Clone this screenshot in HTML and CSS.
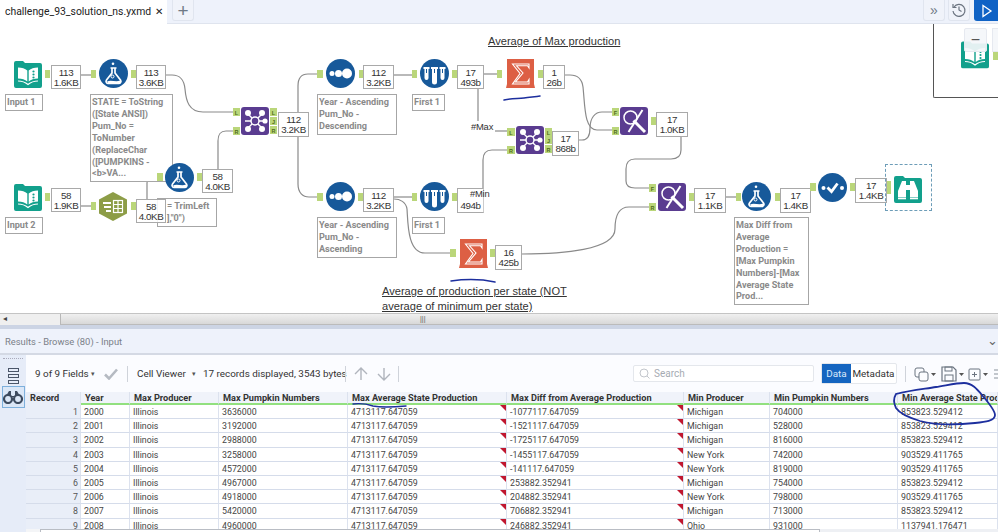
FILE: index.html
```html
<!DOCTYPE html>
<html lang="en">
<head>
<meta charset="utf-8">
<title>challenge_93_solution_ns.yxmd</title>
<link rel="stylesheet" href="styles.css">
</head>
<body>
<header class="tabbar">
  <div class="tab"><span class="tab-name">challenge_93_solution_ns.yxmd</span><span class="tab-x">&#10005;</span></div>
  <div class="tab-rest">
    <button class="tb-btn tb-plus">+</button>
    <div class="spacer"></div>
    <button class="tb-btn tb-more">&raquo;</button>
    <button class="tb-btn tb-hist"><svg width="16" height="16" viewBox="0 0 16 16" fill="none" stroke="#6b7480" stroke-width="1.2"><path d="M3 5a6 6 0 1 1-1 4"/><path d="M2 2v3.500h3.500"/><path d="M8 4.500V8l2.500 1.500"/></svg></button>
    <button class="tb-run"><svg width="12" height="14" viewBox="0 0 12 14" fill="none" stroke="#fff" stroke-width="1.3"><path d="M2 1.500 10 7l-8 5.500z"/></svg></button>
  </div>
</header>

<main class="canvas">
  <svg class="wires" width="998" height="289" viewBox="0 24 998 289" fill="none" stroke="#8a8a8a" stroke-width="1.2">
    <path d="M81 75H91"/>
    <path d="M166 75h6c8 0 12 4 13 14 1 12 4 23 18 23h30"/>
    <path d="M81 206H91"/>
    <path d="M147 199v-16c0-5 3-6 6-6h4"/>
    <path d="M218 169v-28c0-8 3-10 8-10h7"/>
    <path d="M298 112V86c0-9 4-12 10-12h9"/>
    <path d="M298 137v47c0 9 5 13 11 13h8"/>
    <path d="M394 75h18"/>
    <path d="M394 197h18"/>
    <path d="M484 74h13"/>
    <path d="M478 89v34"/>
    <path d="M495 131h12"/>
    <path d="M483 188v-28c0-7 3-10 9-10h15"/>
    <path d="M565 75h5c7 0 12 4 13 12 2 18 1 43 14 43h15"/>
    <path d="M579 140h3c6 0 8-4 8-12 0-10 5-16 12-16h10"/>
    <path d="M681 137v13c0 6-3 9-10 9h-36c-6 0-9 4-9 10v12c0 5 4 7 9 7h15"/>
    <path d="M394 199c6 0 12 3 13 10 1 12 0 44 18 44h25"/>
    <path d="M522 254c40 0 93-4 93-25 0-15 5-22 14-22h21"/>
    <path d="M726 197h10"/>
  </svg>

  <div class="note note-a">Average of Max production</div>
  <div class="note note-b">Average of production per state (NOT<br>average of minimum per state)</div>

  <div class="label l-in1">Input 1</div>
  <div class="label l-state">STATE = ToString<br>([State ANSI])<br>Pum_No =<br>ToNumber<br>(ReplaceChar<br>([PUMPKINS -<br>&lt;b&gt;VA...</div>
  <div class="label l-in2">Input 2</div>
  <div class="label l-trim">= TrimLeft<br>],"0")</div>
  <div class="label l-s1">Year - Ascending<br>Pum_No -<br>Descending</div>
  <div class="label l-f1">First 1</div>
  <div class="label l-s2">Year - Ascending<br>Pum_No -<br>Ascending</div>
  <div class="label l-f2">First 1</div>
  <div class="label l-diff">Max Diff from<br>Average<br>Production =<br>[Max Pumpkin<br>Numbers]-[Max<br>Average State<br>Prod...</div>

  <div class="badge b1">113<br>1.6KB</div>
  <div class="badge b2">113<br>3.6KB</div>
  <div class="badge b3">112<br>3.2KB</div>
  <div class="badge b4">112<br>3.2KB</div>
  <div class="badge b5">17<br>493b</div>
  <div class="badge b6">1<br>26b</div>
  <div class="badge b7">17<br>868b</div>
  <div class="badge b8">17<br>1.0KB</div>
  <div class="badge b9">58<br>1.9KB</div>
  <div class="badge b10">58<br>4.0KB</div>
  <div class="badge b11">58<br>4.0KB</div>
  <div class="badge b12">112<br>3.2KB</div>
  <div class="badge b13">&nbsp;<br>494b</div>
  <div class="badge b14">16<br>425b</div>
  <div class="badge b15">17<br>1.1KB</div>
  <div class="badge b16">17<br>1.4KB</div>
  <div class="badge b17">17<br>1.4KB</div>

  <div class="tag tag-max">#Max</div>
  <div class="tag tag-min">#Min</div>

  <div class="selection"></div>

  <svg class="icons" width="998" height="289" viewBox="0 24 998 289">
    <defs>
      <symbol id="i-book" viewBox="0 0 28 28">
        <path d="M0 3a2 2 0 0 1 2-2h7l2 2h15a2 2 0 0 1 2 2v21a2 2 0 0 1-2 2H2a2 2 0 0 1-2-2z" fill="#12a08c"/>
        <path d="M4 7.500c4 0 7 1 9.300 3v11c-2.300-2-5.300-3-9.300-3zM14.700 10.500c2.300-2 5.300-3 9.300-3v11c-4 0-7 1-9.300 3z" fill="#fff"/>
        <circle cx="19.500" cy="11.500" r="1.100" fill="#12a08c"/><circle cx="19.500" cy="14.500" r="1.100" fill="#12a08c"/><circle cx="19.500" cy="17.500" r="1.100" fill="#12a08c"/>
        <path d="M4 21c4 0 7 1 10 3.500 3-2.500 6-3.500 10-3.500" fill="none" stroke="#fff" stroke-width="1.200"/>
      </symbol>
      <symbol id="i-flask" viewBox="0 0 29 29">
        <circle cx="14.500" cy="14.500" r="14.500" fill="#17599a"/>
        <circle cx="14" cy="4.800" r="1.300" fill="#fff"/>
        <path d="M11.500 9h6M13 9v5l-5.500 7a2.200 2.200 0 0 0 2 3.500h10a2.200 2.200 0 0 0 2-3.500L16 14V9" fill="none" stroke="#fff" stroke-width="1.700"/>
        <path d="M8 22.500c4-2 9 1 13-1l1 2-2 1.500h-10z" fill="#fff"/>
        <circle cx="13.500" cy="17.500" r="1.500" fill="none" stroke="#fff" stroke-width="1"/>
      </symbol>
      <symbol id="i-join" viewBox="0 0 28 28">
        <rect width="28" height="28" rx="3" fill="#5a3c90"/>
        <g stroke="#fff" stroke-width="1.400"><path d="M7 7 21 21M21 7 7 21M4 14H24"/></g>
        <g fill="#fff"><circle cx="7" cy="6" r="3"/><circle cx="21" cy="6" r="3"/><circle cx="7" cy="22" r="3"/><circle cx="21" cy="22" r="3"/><circle cx="24" cy="14" r="2.600"/></g>
        <circle cx="14" cy="14" r="4" fill="#5a3c90" stroke="#fff" stroke-width="1.500"/>
      </symbol>
      <symbol id="i-sort" viewBox="0 0 29 29">
        <circle cx="14.500" cy="14.500" r="14.500" fill="#17599a"/>
        <circle cx="6" cy="14.500" r="2.500" fill="#fff"/><circle cx="12.500" cy="14.500" r="3.500" fill="#fff"/><circle cx="21" cy="14.500" r="5" fill="#fff"/>
      </symbol>
      <symbol id="i-sample" viewBox="0 0 29 29">
        <circle cx="14.500" cy="14.500" r="14.500" fill="#17599a"/>
        <g fill="#fff"><path d="M3.500 8h6v2H8.500v9a2 2 0 0 1-4 0v-9h-1z"/><path d="M11 8h7v2h-1v13a2.500 2.500 0 0 1-5 0V10h-1z"/><path d="M19.500 8h6v2h-1v9a2 2 0 0 1-4 0v-9h-1z"/></g>
        <g fill="#17599a"><rect x="6" y="10" width="1" height="4"/><rect x="14" y="10" width="1" height="4"/><rect x="22" y="10" width="1" height="4"/></g>
      </symbol>
      <symbol id="i-sigma" viewBox="0 0 29 29">
        <rect x="1" width="27" height="29" fill="#dd5f44"/><path d="M1 29H0L1 25zM28 29h1l-1-4z" fill="#dd5f44"/>
        <path d="M6.500 5H23V9L21.500 6.800H10.500L17 14 9.500 23H21.500L23 20.500V25H6.500L14 14.500z" fill="none" stroke="#fff" stroke-width="1.100"/>
      </symbol>
      <symbol id="i-find" viewBox="0 0 28 28">
        <rect width="28" height="28" rx="3" fill="#5a3c90"/>
        <circle cx="10.500" cy="10.500" r="6.500" fill="none" stroke="#fff" stroke-width="1.500"/>
        <path d="M22.500 3 8.500 25" stroke="#fff" stroke-width="2"/>
        <path d="M13.500 13.500 25 25" stroke="#fff" stroke-width="3"/>
      </symbol>
      <symbol id="i-hex" viewBox="0 0 28 29">
        <path d="M14 0 28 7.500V21.500L14 29 0 21.500V7.500z" fill="#8d9d47"/>
        <g fill="#fff"><rect x="4" y="10" width="8" height="2"/><rect x="5" y="14" width="7" height="2"/><rect x="7" y="18" width="5" height="2"/></g>
        <g fill="none" stroke="#fff" stroke-width="1.200"><rect x="14.500" y="8.500" width="9" height="12"/><path d="M14.500 12.500h9M14.500 16.500h9M19 8.500v12"/></g>
      </symbol>
      <symbol id="i-check" viewBox="0 0 29 29">
        <circle cx="14.500" cy="14.500" r="14.500" fill="#17599a"/>
        <circle cx="5.500" cy="15" r="2" fill="#fff"/><circle cx="24" cy="15" r="2" fill="#fff"/>
        <path d="M9.500 14.500l4 4 6-8" fill="none" stroke="#fff" stroke-width="2.800"/>
      </symbol>
      <symbol id="i-browse" viewBox="0 0 28 28">
        <path d="M0 3a2 2 0 0 1 2-2h7l2 2h15a2 2 0 0 1 2 2v21a2 2 0 0 1-2 2H2a2 2 0 0 1-2-2z" fill="#12a08c"/>
        <g fill="#fff"><path d="M8 6h4v16H4v-6z"/><path d="M16 6h4l4 10v6h-8z"/><rect x="12" y="10" width="4" height="5"/><rect x="4" y="22.500" width="8" height="1.800"/><rect x="16" y="22.500" width="8" height="1.800"/></g>
      </symbol>
    </defs>

    <use href="#i-book" x="14" y="60" width="28" height="28"/>
    <use href="#i-book" x="14" y="183" width="28" height="28"/>
    <use href="#i-flask" x="99" y="59" width="29" height="29"/>
    <use href="#i-flask" x="165" y="163" width="29" height="29"/>
    <use href="#i-flask" x="742" y="182" width="29" height="29"/>
    <use href="#i-hex" x="99" y="192" width="28" height="29"/>
    <use href="#i-join" x="241" y="107" width="28" height="28"/>
    <use href="#i-join" x="516" y="126" width="28" height="28"/>
    <use href="#i-sort" x="326" y="59" width="29" height="29"/>
    <use href="#i-sort" x="326" y="182" width="29" height="29"/>
    <use href="#i-sample" x="420" y="59" width="29" height="29"/>
    <use href="#i-sample" x="420" y="182" width="29" height="29"/>
    <use href="#i-sigma" x="506" y="59" width="29" height="29"/>
    <use href="#i-sigma" x="459" y="239" width="29" height="29"/>
    <use href="#i-find" x="620" y="107" width="28" height="28"/>
    <use href="#i-find" x="658" y="183" width="28" height="28"/>
    <use href="#i-check" x="818" y="173" width="29" height="29"/>
    <use href="#i-browse" x="894" y="175" width="28" height="28"/>

    <g fill="#bad67a">
      <rect x="45" y="70" width="5" height="8"/><rect x="91" y="70" width="5" height="8"/><rect x="131" y="70" width="5" height="8"/>
      <rect x="45" y="193" width="5" height="8"/><rect x="91" y="202" width="5" height="8"/><rect x="131" y="202" width="5" height="8"/>
      <rect x="157" y="173" width="6" height="8"/><rect x="197" y="173" width="5" height="8"/>
      <rect x="233" y="108" width="7" height="8"/><rect x="233" y="127" width="7" height="8"/>
      <rect x="270" y="108" width="7" height="8"/><rect x="270" y="117" width="7" height="8"/><rect x="270" y="126" width="7" height="8"/>
      <rect x="317" y="70" width="6" height="8"/><rect x="359" y="70" width="4" height="8"/><rect x="412" y="70" width="5" height="8"/><rect x="452" y="70" width="5" height="8"/>
      <rect x="497" y="70" width="5" height="8"/><rect x="538" y="70" width="5" height="8"/>
      <rect x="507" y="128" width="8" height="8"/><rect x="507" y="146" width="8" height="8"/>
      <rect x="545" y="128" width="7" height="8"/><rect x="545" y="136" width="7" height="8"/><rect x="545" y="145" width="7" height="8"/>
      <rect x="612" y="108" width="7" height="8"/><rect x="612" y="127" width="7" height="8"/><rect x="651" y="117" width="5" height="8"/>
      <rect x="317" y="193" width="6" height="8"/><rect x="358" y="193" width="5" height="8"/><rect x="412" y="193" width="5" height="8"/><rect x="452" y="193" width="5" height="8"/>
      <rect x="450" y="249" width="6" height="8"/><rect x="490" y="249" width="5" height="8"/>
      <rect x="649" y="184" width="7" height="8"/><rect x="649" y="203" width="7" height="8"/><rect x="689" y="193" width="5" height="8"/>
      <rect x="736" y="193" width="5" height="8"/><rect x="775" y="193" width="5" height="8"/><rect x="810" y="183" width="6" height="8"/>
      <rect x="850" y="183" width="5" height="8"/><rect x="887" y="181" width="4" height="13"/>
    </g>
    <g class="port-text">
      <text x="236.500" y="114.500">L</text><text x="236.500" y="133.500">R</text>
      <text x="273.500" y="114.500">L</text><text x="273.500" y="123.500">J</text><text x="273.500" y="132.500">R</text>
      <text x="511" y="134.500">L</text><text x="511" y="152.500">R</text>
      <text x="548.500" y="134.500">L</text><text x="548.500" y="142.500">J</text><text x="548.500" y="151.500">R</text>
      <text x="615.500" y="114.500">F</text><text x="615.500" y="133.500">R</text>
      <text x="652.500" y="190.500">F</text><text x="652.500" y="209.500">R</text>
    </g>

    <g fill="none" stroke="#1d2f9e" stroke-width="1.500" stroke-linecap="round">
      <path d="M504 100c10-2 14-1 20-2 6-1 12-1 16-2"/>
      <path d="M451 281c14-2 30-2 44 1"/>
    </g>
  </svg>

  <div class="overview">
    <svg class="ov-book" width="28" height="29" viewBox="0 0 28 28"><use href="#i-book"/></svg>
    <div class="ov-anchor"></div>
    <div class="ov-minus">&minus;</div>
    <div class="ov-plus"></div>
  </div>
</main>

<div class="hscroll">
  <div class="hs-arrow">&#9666;</div>
  <div class="hs-thumb">|||</div>
</div>

<section class="results">
  <div class="res-title"><span>Results - Browse (80) - Input</span><span class="res-chev">&#8964;</span></div>
  <div class="res-body">
    <aside class="side">
      <div class="grip"></div>
      <div class="side-list"><i></i><i></i><i></i></div>
      <div class="side-bino"><svg width="20" height="14" viewBox="0 0 20 14"><circle cx="5" cy="9" r="4" fill="none" stroke="#3c4a5e" stroke-width="2.200"/><circle cx="15" cy="9" r="4" fill="none" stroke="#3c4a5e" stroke-width="2.200"/><path d="M3 6 6 1h2v6h4V1h2l3 5" fill="#3c4a5e"/></svg></div>
    </aside>
    <div class="main-pane">
      <div class="toolbar">
        <span class="t-fields">9 of 9 Fields</span><span class="t-caret">&#9662;</span>
        <svg class="t-check" width="14" height="12" viewBox="0 0 14 12"><path d="M1 6.500 5 10.500 13 1.500" fill="none" stroke="#b5bac2" stroke-width="2.600"/></svg>
        <span class="sep"></span>
        <span class="t-viewer">Cell Viewer</span><span class="t-caret">&#9662;</span>
        <span class="t-info">17 records displayed, 3543 bytes</span>
        <span class="sep sep-b"></span>
        <svg class="t-arrow" width="14" height="14" viewBox="0 0 14 14"><path d="M7 13V1M1 7l6-6 6 6" fill="none" stroke="#b0b5bd" stroke-width="1.400"/></svg>
        <svg class="t-arrow" width="14" height="14" viewBox="0 0 14 14"><path d="M7 1v12M1 7l6 6 6-6" fill="none" stroke="#b0b5bd" stroke-width="1.400"/></svg>
        <span class="sep sep-c"></span>
        <div class="search"><svg width="11" height="11" viewBox="0 0 11 11"><circle cx="5" cy="5" r="4" fill="none" stroke="#c2c6cc" stroke-width="1"/><path d="M8 8l2.500 2.500" stroke="#c2c6cc"/></svg><span>Search</span></div>
        <div class="seg"><span class="seg-on">Data</span><span class="seg-off">Metadata</span></div>
        <span class="sep sep-d"></span>
        <svg class="t-tool" width="24" height="16" viewBox="0 0 24 16"><rect x="1" y="2" width="9" height="9" rx="2" fill="none" stroke="#6b7480"/><rect x="5" y="6" width="9" height="9" rx="2" fill="#fbfcff" stroke="#6b7480"/><path d="M17 7h5l-2.500 3z" fill="#555"/></svg>
        <svg class="t-tool" width="24" height="16" viewBox="0 0 24 16"><path d="M1 1h11l3 3v11H1z" fill="none" stroke="#6b7480" stroke-width="1.200"/><rect x="4" y="9" width="8" height="6" fill="none" stroke="#6b7480"/><rect x="4" y="1" width="7" height="4" fill="none" stroke="#6b7480"/><path d="M18 7h5l-2.500 3z" fill="#555"/></svg>
        <svg class="t-tool" width="24" height="16" viewBox="0 0 24 16"><rect x="1" y="3" width="11" height="11" rx="1" fill="none" stroke="#6b7480"/><path d="M6.500 6v5M4 8.500h5" stroke="#6b7480"/><path d="M15 7h5l-2.500 3z" fill="#555"/></svg>
        <svg class="t-tool t-last" width="10" height="16" viewBox="0 0 10 16"><path d="M1 4h9M1 8h9M1 12h9" stroke="#b0b5bd" stroke-width="1.300"/></svg>
      </div>
      <div class="grid-wrap">
        <div class="grid">
          <div class="hd hd-rec">Record</div><div class="hd">Year</div><div class="hd">Max Producer</div><div class="hd">Max Pumpkin Numbers</div><div class="hd">Max Average State Production</div><div class="hd">Max Diff from Average Production</div><div class="hd">Min Producer</div><div class="hd">Min Pumpkin Numbers</div><div class="hd">Min Average State Production</div>

          <div class="rn">1</div><div>2000</div><div>Illinois</div><div>3636000</div><div class="flag">4713117.647059</div><div class="flag">-1077117.647059</div><div>Michigan</div><div>704000</div><div>853823.529412</div>
          <div class="rn">2</div><div>2001</div><div>Illinois</div><div>3192000</div><div class="flag">4713117.647059</div><div class="flag">-1521117.647059</div><div>Michigan</div><div>528000</div><div>853823.529412</div>
          <div class="rn">3</div><div>2002</div><div>Illinois</div><div>2988000</div><div class="flag">4713117.647059</div><div class="flag">-1725117.647059</div><div>Michigan</div><div>816000</div><div>853823.529412</div>
          <div class="rn">4</div><div>2003</div><div>Illinois</div><div>3258000</div><div class="flag">4713117.647059</div><div class="flag">-1455117.647059</div><div>New York</div><div>742000</div><div>903529.411765</div>
          <div class="rn">5</div><div>2004</div><div>Illinois</div><div>4572000</div><div class="flag">4713117.647059</div><div class="flag">-141117.647059</div><div>New York</div><div>819000</div><div>903529.411765</div>
          <div class="rn">6</div><div>2005</div><div>Illinois</div><div>4967000</div><div class="flag">4713117.647059</div><div class="flag">253882.352941</div><div>Michigan</div><div>754000</div><div>853823.529412</div>
          <div class="rn">7</div><div>2006</div><div>Illinois</div><div>4918000</div><div class="flag">4713117.647059</div><div class="flag">204882.352941</div><div>New York</div><div>798000</div><div>903529.411765</div>
          <div class="rn">8</div><div>2007</div><div>Illinois</div><div>5420000</div><div class="flag">4713117.647059</div><div class="flag">706882.352941</div><div>Michigan</div><div>713000</div><div>853823.529412</div>
          <div class="rn">9</div><div>2008</div><div>Illinois</div><div>4960000</div><div class="flag">4713117.647059</div><div class="flag">246882.352941</div><div>Ohio</div><div>931000</div><div>1137941.176471</div>
        </div>
        <div class="grid-scroll"><span class="gs-arrow"></span><span class="gs-thumb"></span></div>
      </div>
    </div>
  </div>
  <svg class="ink" width="998" height="203" viewBox="0 329 998 203" fill="none" stroke="#1d2f9e" stroke-linecap="round">
    <path stroke-width="1.400" d="M353 404c8-1 14 0 20 2 10 2 22 1 33 0"/>
    <path stroke-width="1.800" d="M896 394c15-4 28-5 40-7 8-1 20-4 28-4 8 0 13 6 18 12 5 6 13 15 13 20 0 6-10 7-20 8-18 2-40 2-55-2-10-3-20-7-24-13-2-4-3-9 0-14"/>
  </svg>
</section>
</body>
</html>
```
FILE: styles.css
```css
* { box-sizing: border-box; }
html, body { margin: 0; height: 100%; }
body {
  width: 998px; height: 532px; overflow: hidden; display: flex; flex-direction: column;
  background: #fff; font-family: Roboto, "Liberation Sans", sans-serif; color: #333;
}

/* tab bar */
.tabbar { display: flex; height: 24px; flex: none; }
.tab { width: 167px; display: flex; align-items: center; padding: 0 0 2px 5px; background: #fff; }
.tab-name { font-size: 10.4px; color: #222; width: 150px; white-space: nowrap; }
.tab-x { font-size: 10px; color: #222; font-family: "DejaVu Sans", sans-serif; }
.tab-rest { flex: 1; display: flex; align-items: flex-start; background: #eef2fb; border-bottom: 1px solid #dfe4ee; padding-left: 5px; gap: 3px; }
.spacer { flex: 1; }
.tb-btn { height: 21px; width: 22px; border: 1px solid #e0e5ef; border-top: 0; border-radius: 0 0 3px 3px; background: #f0f3fa; color: #6f7986; padding: 0; display: flex; align-items: center; justify-content: center; font-family: "Liberation Sans", sans-serif; }
.tb-plus { font-size: 19px; font-weight: 400; line-height: 1; }
.tb-more { font-size: 14px; }
.tb-hist { margin-right: 1px; }
.tb-run { width: 24px; height: 21px; background: #0f62c5; border: 0; padding: 0 0 0 2px; display: flex; align-items: center; justify-content: center; border-radius: 0 0 0 3px; }

/* free canvas */
.canvas { position: relative; height: 289px; flex: none; background: #fff; overflow: hidden; }
.wires, .icons { position: absolute; left: 0; top: 0; }
.port-text { font: 700 5.5px "Liberation Sans", sans-serif; fill: #4e6b1a; text-anchor: middle; }
.note { position: absolute; font-family: "Liberation Sans", sans-serif; font-size: 11.1px; line-height: 15px; color: #333; text-decoration: underline; white-space: nowrap; }
.note-a { left: 488px; top: 10px; }
.note-b { left: 382px; top: 260px; }

.label { position: absolute; border: 1px solid #a6a6a6; background: #fff; font: 700 9.1px/11.9px Roboto, sans-serif; color: #8a8a8a; padding: 2px 1px; white-space: nowrap; overflow: hidden; }
.l-in1 { left: 5px; top: 70px; width: 38px; height: 17px; }
.l-state { left: 90px; top: 70px; width: 83px; height: 88px; }
.l-in2 { left: 5px; top: 193px; width: 38px; height: 17px; }
.l-trim { left: 157px; top: 174px; width: 60px; height: 29px; padding-left: 9px; }
.l-s1 { left: 317px; top: 70px; width: 80px; height: 41px; }
.l-f1 { left: 412px; top: 70px; width: 33px; height: 17px; }
.l-s2 { left: 317px; top: 193px; width: 80px; height: 41px; }
.l-f2 { left: 412px; top: 193px; width: 33px; height: 17px; }
.l-diff { left: 734px; top: 193px; width: 75px; height: 88px; }

.badge { position: absolute; border: 1px solid #a9a9a9; background: rgba(255,255,255,.88); font: 9.8px/9.5px "Liberation Sans", sans-serif; color: #333; text-align: center; height: 24px; padding-top: 2px; letter-spacing: -.4px; white-space: nowrap; }
.b1 { left: 51px; top: 41px; width: 30px; }
.b2 { left: 136px; top: 41px; width: 30px; }
.b3 { left: 278px; top: 88px; width: 31px; height: 25px; }
.b4 { left: 363px; top: 41px; width: 31px; }
.b5 { left: 457px; top: 41px; width: 27px; }
.b6 { left: 543px; top: 41px; width: 22px; }
.b7 { left: 552px; top: 107px; width: 27px; height: 25px; }
.b8 { left: 656px; top: 88px; width: 32px; height: 25px; }
.b9 { left: 51px; top: 164px; width: 30px; }
.b10 { left: 136px; top: 175px; width: 30px; }
.b11 { left: 202px; top: 145px; width: 31px; }
.b12 { left: 363px; top: 164px; width: 31px; }
.b13 { left: 457px; top: 164px; width: 27px; height: 25px; border-right-color: #ccc; }
.b14 { left: 495px; top: 221px; width: 27px; height: 25px; }
.b15 { left: 694px; top: 164px; width: 32px; height: 25px; }
.b16 { left: 780px; top: 164px; width: 31px; height: 25px; }
.b17 { left: 855px; top: 154px; width: 32px; height: 25px; }

.tag { position: absolute; font: 9.4px/12px "Liberation Sans", sans-serif; letter-spacing: -.2px; color: #333; white-space: nowrap; }
.tag-max { left: 471px; top: 97px; background: #fff; padding-right: 1px; }
.tag-min { left: 470px; top: 164px; }

.selection { position: absolute; left: 885px; top: 140px; width: 47px; height: 47px; border: 1px dashed #6d9db8; }

.overview { position: absolute; right: 0; top: 0; width: 65px; height: 74px; background: #fff; border-left: 1px solid #555; border-bottom: 1px solid #555; border-bottom-left-radius: 2px; }
.ov-book { position: absolute; left: 27px; top: 16px; }
.ov-anchor { position: absolute; left: 59px; top: 28px; width: 6px; height: 8px; background: #bad67a; }
.ov-minus { position: absolute; left: 30px; top: 4px; width: 23px; height: 24px; background: rgba(244,246,250,.92); border: 1px solid #e6e9f0; border-radius: 2px; text-align: center; font: 16px/21px "Liberation Sans", sans-serif; color: #555; }
.ov-plus { position: absolute; left: 58px; top: 4px; width: 7px; height: 24px; background: rgba(244,246,250,.92); border: 1px solid #e6e9f0; }

/* horizontal canvas scrollbar */
.hscroll { height: 12px; flex: none; display: flex; background: #ececec; border-top: 1px solid #c4c4c4; }
.hs-arrow { width: 60px; font-size: 8px; line-height: 10px; color: #444; padding-left: 3px; font-family: "DejaVu Sans", sans-serif; background: #efefef; }
.hs-thumb { flex: 1; background: linear-gradient(#f0f0f0, #d8d8d8); border-left: 1px solid #b8b8b8; border-bottom: 1px solid #bbb; font: 7px/10px "Liberation Sans", sans-serif; color: #555; padding-left: 359px; }

/* results */
.results { position: relative; flex: 1; display: flex; flex-direction: column; min-height: 0; background: #fff; border-top: 4px solid #ccd4e4; }
.res-title { height: 26px; flex: none; display: flex; justify-content: space-between; align-items: center; padding: 0 0 0 5px; background: #eef2fb; border-bottom: 2px solid #d4d9e4; font-size: 9.4px; color: #7a8088; }
.res-chev { font-size: 13px; line-height: 8px; color: #666; }
.res-body { flex: 1; display: flex; min-height: 0; }
.side { width: 26px; flex: none; background: #e6ecf8; position: relative; display: flex; flex-direction: column; align-items: center; }
.grip { width: 20px; height: 1px; margin-top: 3px; border-top: 1px dotted #aab; }
.side-list { margin-top: 9px; width: 11px; display: flex; flex-direction: column; gap: 2px; }
.side-list i { display: block; height: 4px; border: 1px solid #4a5568; }
.side-bino { margin-top: 2px; width: 23px; height: 22px; border: 1px solid #7eb0dc; background: #dbe7f7; display: flex; align-items: center; justify-content: center; }
.main-pane { flex: 1; min-width: 0; display: flex; flex-direction: column; background: #fbfcff; }

.toolbar { height: 37px; flex: none; display: flex; align-items: center; padding-left: 9px; font-size: 9.9px; color: #333; white-space: nowrap; overflow: hidden; }
.t-fields { width: 56px; flex: none; }
.t-viewer { width: 55px; flex: none; }
.t-caret { font-size: 7px; color: #555; width: 13px; font-family: "DejaVu Sans", sans-serif; flex: none; }
.t-check { flex: none; }
.sep { width: 1px; height: 16px; background: #cfd3da; margin: 0 9px; flex: none; }
.t-info { margin-left: -2px; width: 142px; flex: none; }
.sep-b { margin: 0 8px 0 0; }
.t-arrow { margin-right: 9px; flex: none; }
.sep-c { margin: 0 0 0 -2px; }
.search { margin-left: 234px; width: 181px; height: 17px; border: 1px solid #e4e7ec; background: #fff; border-radius: 2px; display: flex; align-items: center; gap: 4px; padding-left: 5px; color: #a6abb3; font-size: 10px; flex: none; }
.seg { margin-left: 7px; display: flex; height: 21px; border: 1px solid #e4e7ec; border-radius: 2px; background: #fff; width: 76px; align-items: stretch; font-size: 9.9px; flex: none; }
.seg span { display: flex; align-items: center; justify-content: center; }
.seg-on { width: 29px; background: #1565c0; color: #dbe9fa; }
.seg-off { flex: 1; color: #333; }
.sep-d { margin: 0 8px; }
.t-tool { flex: none; margin-right: 3px; }
.t-last { margin-left: -2px; margin-right: 0; }

.grid-wrap { position: relative; flex: 1; overflow: hidden; }
.grid { display: grid; grid-template-columns: 55px 49px 89px 129px 159px 177px 86px 128px 100px; grid-template-rows: 13px; grid-auto-rows: 14.2px; width: 972px; overflow: hidden; font-size: 8.8px; line-height: 13px; color: #444; }
.grid > div { position: relative; background: #fff; border-right: 1px solid #dce2ee; border-bottom: 1px solid #d5dcea; padding: 1px 0 0 3px; white-space: nowrap; overflow: hidden; }
.grid > .hd { background: #f0f3fa; font-weight: 700; font-size: 9.2px; color: #333; border-bottom: 2px solid #92e07f; line-height: 11px; padding: 0 0 0 4px; }
.grid > .hd-rec { background: #e9eef8; border-bottom: 1px solid #e9eef8; }
.grid > .rn { background: #e9eef8; text-align: right; padding-right: 2px; color: #555; }
.grid > .flag::after { content: ""; position: absolute; top: 0; right: 0; width: 0; height: 0; border-top: 6px solid #c0172f; border-left: 6px solid transparent; }
.grid-scroll { position: absolute; left: 0; right: 0; bottom: 0; height: 3px; display: flex; background: #eef0f4; }
.gs-arrow { width: 14px; background: #f4f5f7; }
.gs-thumb { width: 780px; background: #fff; border: 1px solid #b9bdc4; border-bottom: 0; }

.ink { position: absolute; left: 0; top: 0; pointer-events: none; }
```
